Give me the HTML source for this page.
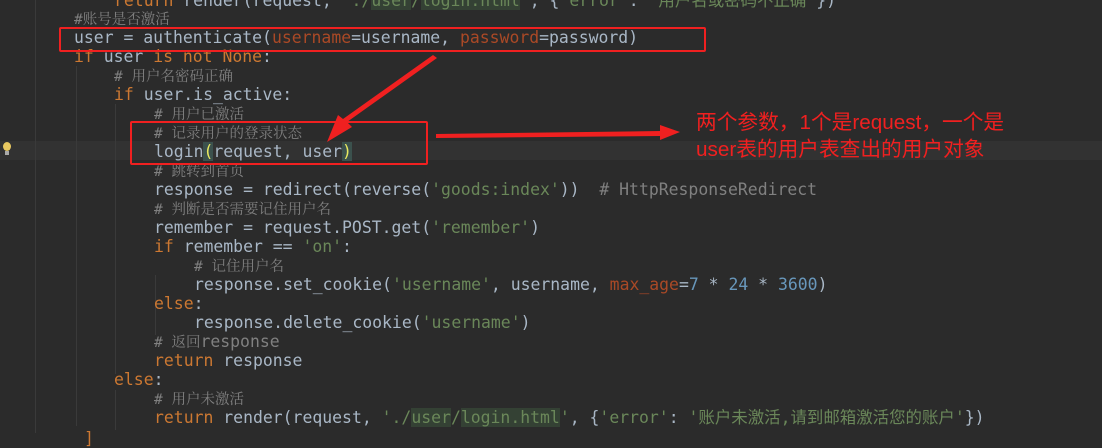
<!DOCTYPE html>
<html><head><meta charset="utf-8"><style>
body{margin:0;width:1102px;height:433px;background:#2b2b2b;overflow:hidden;position:relative;font-family:"DejaVu Sans Mono","Liberation Mono","Noto Sans CJK SC",monospace;}
.l{position:absolute;left:0;height:19px;line-height:19px;font-size:16.45px;color:#a9b7c6;white-space:pre;}
.k{color:#cc7832}.c{color:#808080;font-family:"DejaVu Sans Mono","Noto Serif CJK SC",monospace;font-size:14.5px}.s{color:#6a8759}.n{color:#6897bb}.p{color:#aa4926}
.cm{color:#808080;font-size:16.45px;font-family:"DejaVu Sans Mono",monospace}
.h{background:#344134}.y{color:#e8e860;background:#3b514d}
.g{position:absolute;width:1px;background:#3a3a3a}
.box{position:absolute;border:2px solid #f02020;border-radius:2px}
</style></head><body>
<div style="position:absolute;left:0;top:141px;width:1102px;height:19px;background:#323232"></div>
<div class="g" style="left:35px;top:0;height:433px"></div>
<div class="g" style="left:76px;top:66px;height:360px"></div>
<div class="g" style="left:115px;top:104px;height:270px"></div>
<div class="g" style="left:155px;top:275px;height:60px"></div>
<div class="g" style="left:115px;top:390px;height:40px"></div>
<div style="position:absolute;left:3px;top:142px;width:8px;height:9px;border-radius:50%;background:#e8c860"></div>
<div style="position:absolute;left:5px;top:151px;width:4px;height:4px;background:#aaa"></div>
<div class="l" style="top:-9px;left:114px"><span class="k">return</span> render(request, <span class="s">'./<span class="h">user</span>/<span class="h">login.html</span>'</span>, {<span class="s">'error'</span>: <span class="s">'用户名或密码不正确'</span>})</div>
<div class="l" style="top:9px;left:74px"><span class="c">#账号是否激活</span></div>
<div class="l" style="top:28px;left:74px">user = authenticate(<span class="p">username</span>=username, <span class="p">password</span>=password)</div>
<div class="l" style="top:47px;left:74px"><span class="k">if</span> user <span class="k">is not None</span>:</div>
<div class="l" style="top:66px;left:114px"><span class="c"># 用户名密码正确</span></div>
<div class="l" style="top:85px;left:114px"><span class="k">if</span> user.is_active:</div>
<div class="l" style="top:104px;left:154px"><span class="c"># 用户已激活</span></div>
<div class="l" style="top:123px;left:154px"><span class="c"># 记录用户的登录状态</span></div>
<div class="l" style="top:142px;left:154px">login<span class="y">(</span>request, user<span class="y">)</span></div>
<div class="l" style="top:161px;left:154px"><span class="c"># 跳转到首页</span></div>
<div class="l" style="top:180px;left:154px">response = redirect(reverse(<span class="s">'goods:index'</span>))  <span class="cm"># HttpResponseRedirect</span></div>
<div class="l" style="top:199px;left:154px"><span class="c"># 判断是否需要记住用户名</span></div>
<div class="l" style="top:218px;left:154px">remember = request.POST.get(<span class="s">'remember'</span>)</div>
<div class="l" style="top:237px;left:154px"><span class="k">if</span> remember == <span class="s">'on'</span>:</div>
<div class="l" style="top:256px;left:194px"><span class="c"># 记住用户名</span></div>
<div class="l" style="top:275px;left:194px">response.set_cookie(<span class="s">'username'</span>, username, <span class="p">max_age</span>=<span class="n">7</span> * <span class="n">24</span> * <span class="n">3600</span>)</div>
<div class="l" style="top:294px;left:154px"><span class="k">else</span>:</div>
<div class="l" style="top:313px;left:194px">response.delete_cookie(<span class="s">'username'</span>)</div>
<div class="l" style="top:332px;left:154px"><span class="c"># 返回</span><span class="cm">response</span></div>
<div class="l" style="top:351px;left:154px"><span class="k">return</span> response</div>
<div class="l" style="top:370px;left:114px"><span class="k">else</span>:</div>
<div class="l" style="top:389px;left:154px"><span class="c"># 用户未激活</span></div>
<div class="l" style="top:408px;left:154px"><span class="k">return</span> render(request, <span class="s">'./<span class="h">user</span>/<span class="h">login.html</span>'</span>, {<span class="s">'error'</span>: <span class="s">'账户未激活,请到邮箱激活您的账户'</span>})</div>
<div class="l" style="top:429px;left:84px"><span class="k">]</span></div>
<div class="box" style="left:59px;top:27px;width:643px;height:21px"></div>
<div class="box" style="left:130px;top:121px;width:294px;height:40px"></div>
<svg style="position:absolute;left:0;top:0" width="1102" height="433">
<polygon points="433,55 437,58 347,122 352,127 327,142 338,115 343,119" fill="#f02020"/>
<polygon points="436,134 660,131 660,125 680,132 660,140 660,136 436,138" fill="#f02020"/>
</svg>
<div style="position:absolute;left:696px;top:109px;font-family:'Liberation Sans','Noto Sans CJK SC',sans-serif;font-size:20.7px;line-height:27px;color:#f02020;white-space:nowrap">两个参数，1个是request，一个是<br>user表的用户表查出的用户对象</div>
</body></html>
